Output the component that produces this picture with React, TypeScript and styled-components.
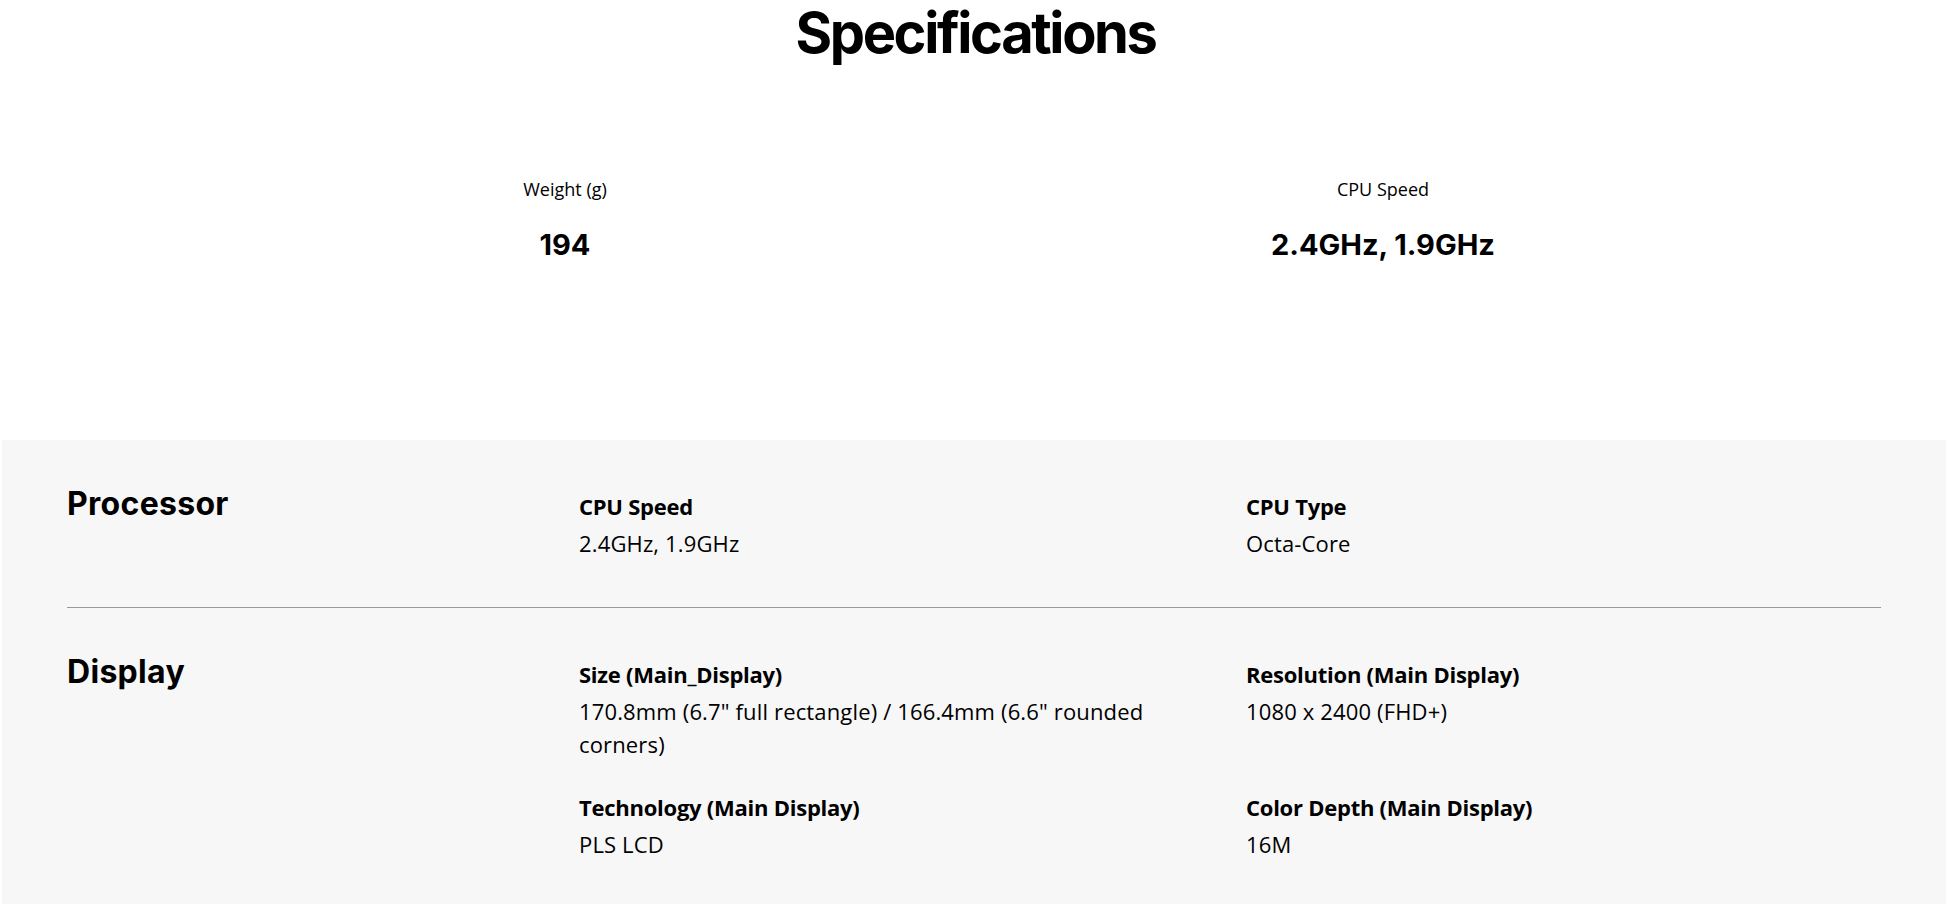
import React from 'react';
import styled, { createGlobalStyle } from 'styled-components';

interface Spec {
  label: string;
  value: string;
}

interface Category {
  name: string;
  specs: Spec[];
}

const GlobalStyle = createGlobalStyle`
  html, body {
    margin: 0;
    padding: 0;
    background: #fff;
    color: #000;
  }
  * {
    box-sizing: border-box;
  }
`;

const Page = styled.div`
  width: 1951px;
  height: 904px;
  overflow: hidden;
  font-family: 'Open Sans', 'Liberation Sans', sans-serif;
`;

const Title = styled.h2`
  margin: 0;
  text-align: center;
  font-family: Inter, 'Liberation Sans', sans-serif;
  font-weight: 700;
  font-size: 56px;
  line-height: 66px;
  letter-spacing: -2.4px;
`;

const KeySpecs = styled.div`
  display: grid;
  grid-template-columns: 1fr 1fr;
  margin: 111px 159px 0 156px;
  height: 263px;
`;

const KeySpec = styled.div`
  display: flex;
  flex-direction: column;
  align-items: center;
`;

const KeyLabel = styled.div`
  font-size: 18px;
  line-height: 24px;
`;

const KeyValue = styled.div`
  margin-top: 26px;
  font-family: Inter, 'Liberation Sans', sans-serif;
  font-weight: 700;
  font-size: 29px;
  line-height: 36px;
`;

const SpecSection = styled.section`
  margin: 0 5px 0 2px;
  background: #f7f7f7;
  padding: 0 65px;
  min-height: 600px;
`;

const CategoryRow = styled.div<{ last?: boolean }>`
  display: grid;
  grid-template-columns: 479px 634px 1fr;
  column-gap: 33px;
  padding: 44px 0 ${(p) => (p.last ? '40px' : '47px')};
  border-bottom: ${(p) => (p.last ? 'none' : '1px solid #999')};
`;

const CategoryName = styled.h3`
  margin: 0;
  font-family: Inter, 'Liberation Sans', sans-serif;
  font-weight: 700;
  font-size: 32px;
  line-height: 40px;
  letter-spacing: 0.3px;
`;

const SpecGrid = styled.div`
  grid-column: 2 / 4;
  display: grid;
  grid-template-columns: 634px 1fr;
  column-gap: 33px;
  row-gap: 31px;
  padding-top: 7px;
`;

const SpecItem = styled.div``;

const SpecLabel = styled.div`
  font-weight: 700;
  font-size: 22px;
  line-height: 30px;
  letter-spacing: -0.25px;
`;

const SpecValue = styled.div`
  margin-top: 6px;
  font-size: 22px;
  line-height: 33px;
  letter-spacing: 0.15px;
`;

const categories: Category[] = [
  {
    name: 'Processor',
    specs: [
      { label: 'CPU Speed', value: '2.4GHz, 1.9GHz' },
      { label: 'CPU Type', value: 'Octa-Core' },
    ],
  },
  {
    name: 'Display',
    specs: [
      { label: 'Size (Main_Display)', value: '170.8mm (6.7" full rectangle) / 166.4mm (6.6" rounded corners)' },
      { label: 'Resolution (Main Display)', value: '1080 x 2400 (FHD+)' },
      { label: 'Technology (Main Display)', value: 'PLS LCD' },
      { label: 'Color Depth (Main Display)', value: '16M' },
    ],
  },
];

export default function App() {
  return (
    <Page>
      <GlobalStyle />
      <Title>Specifications</Title>
      <KeySpecs>
        <KeySpec>
          <KeyLabel>Weight (g)</KeyLabel>
          <KeyValue>194</KeyValue>
        </KeySpec>
        <KeySpec>
          <KeyLabel>CPU Speed</KeyLabel>
          <KeyValue>2.4GHz, 1.9GHz</KeyValue>
        </KeySpec>
      </KeySpecs>
      <SpecSection>
        {categories.map((cat, i) => (
          <CategoryRow key={cat.name} last={i === categories.length - 1}>
            <CategoryName>{cat.name}</CategoryName>
            <SpecGrid>
              {cat.specs.map((s) => (
                <SpecItem key={s.label}>
                  <SpecLabel>{s.label}</SpecLabel>
                  <SpecValue>{s.value}</SpecValue>
                </SpecItem>
              ))}
            </SpecGrid>
          </CategoryRow>
        ))}
      </SpecSection>
    </Page>
  );
}
